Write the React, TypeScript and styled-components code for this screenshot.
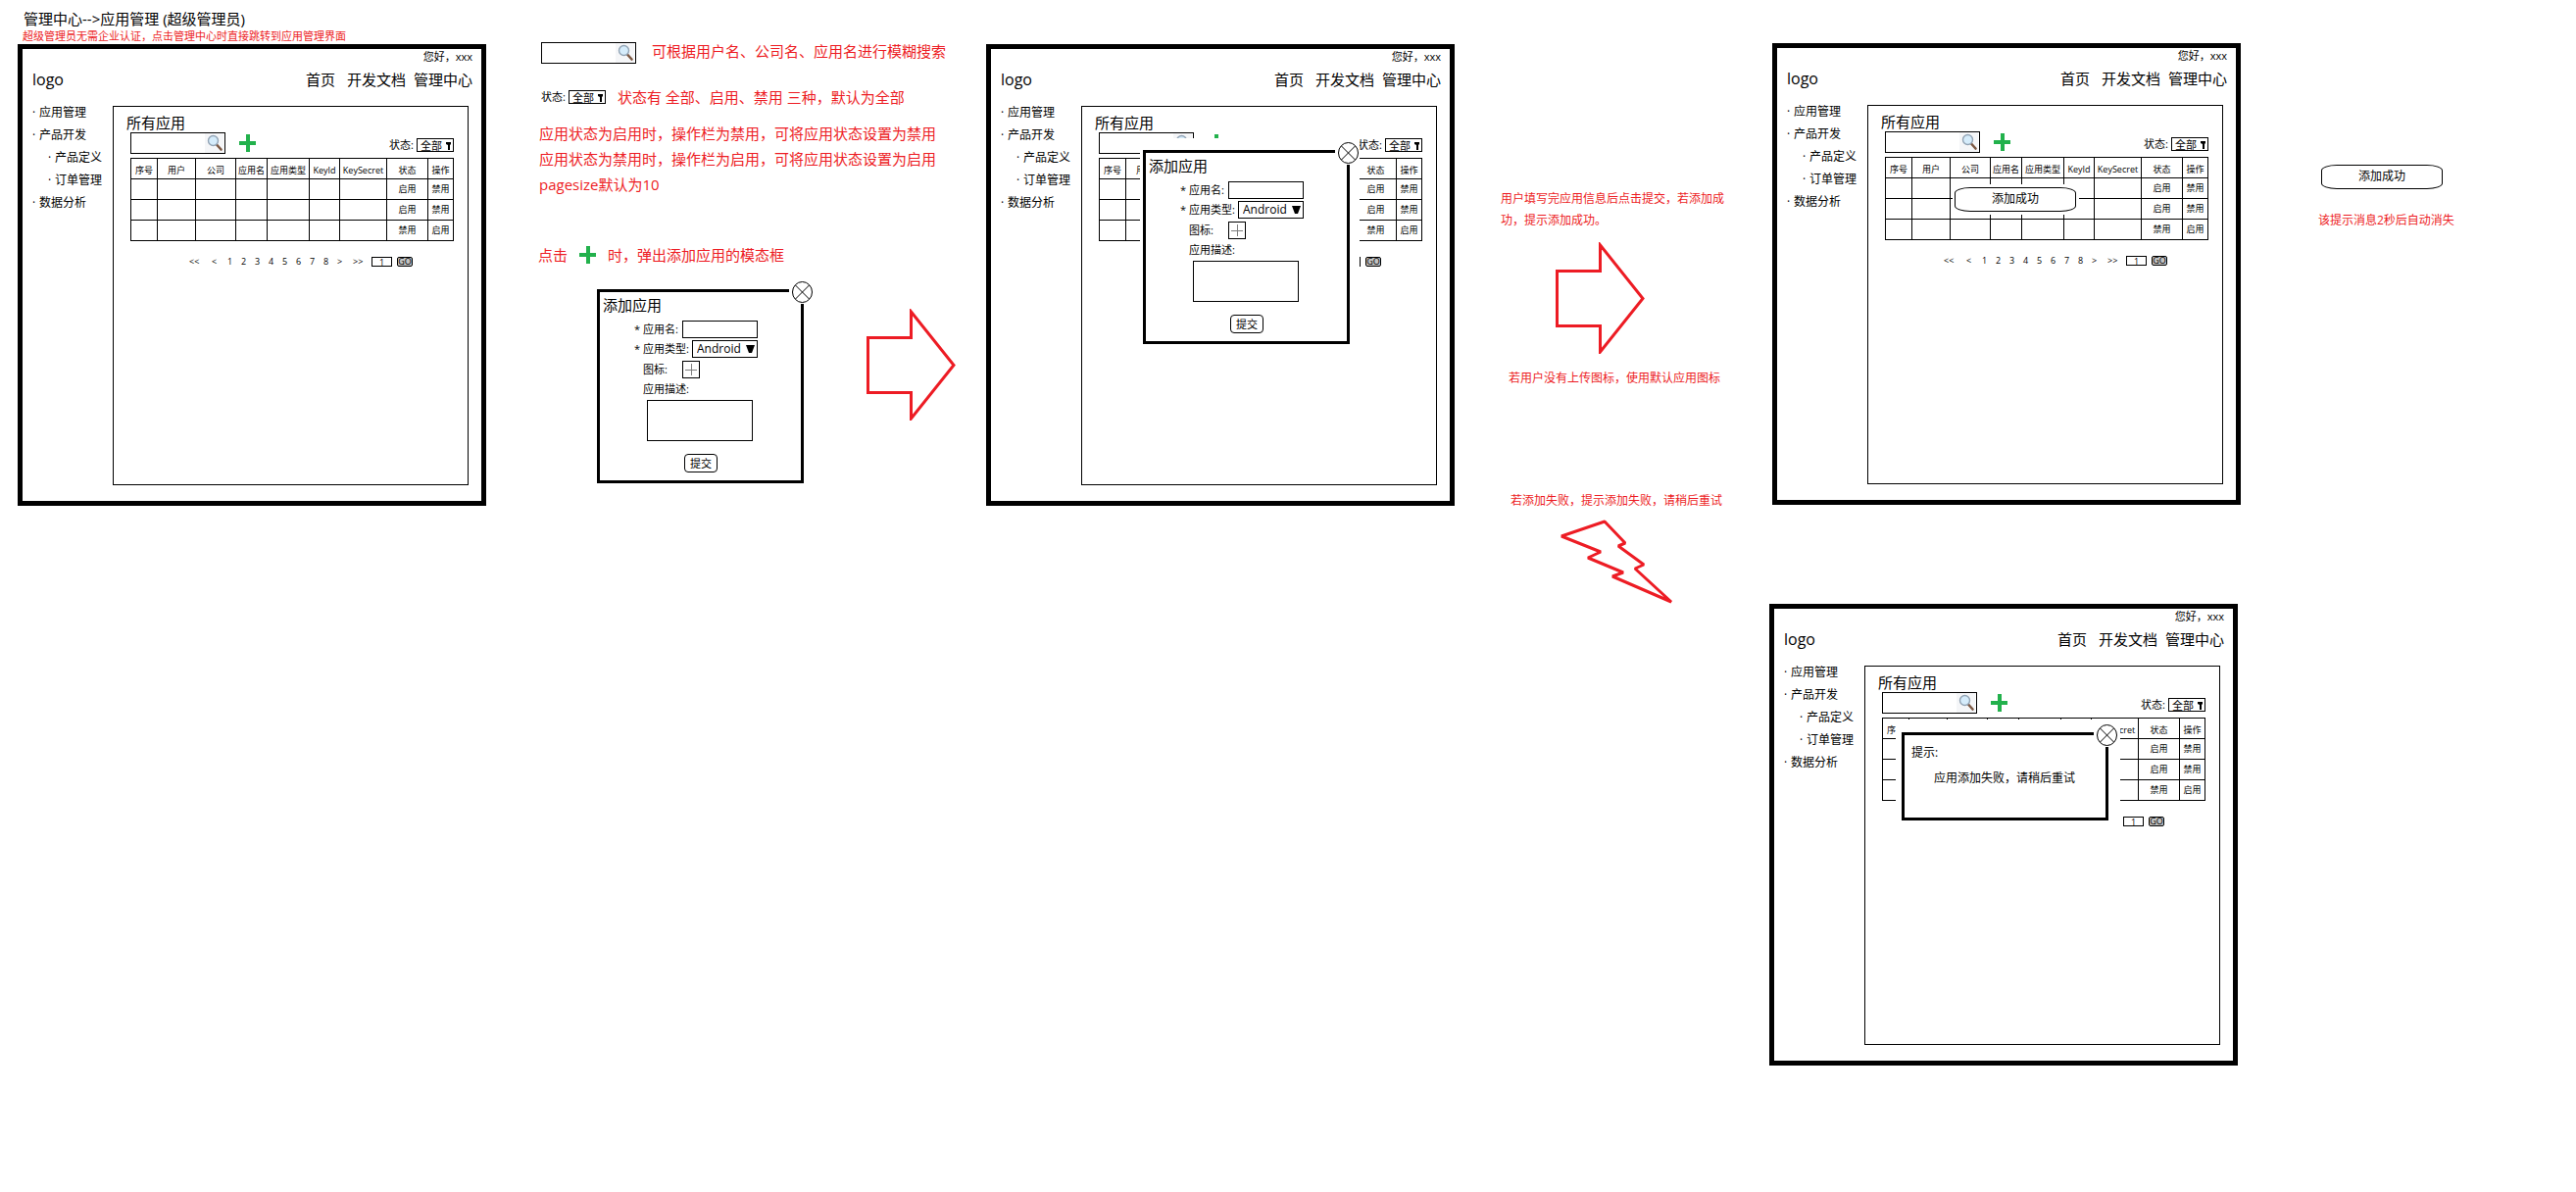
import React, { useId } from "react";
import styled, { createGlobalStyle } from "styled-components";

const RED = "#ed1c24";
const GREEN = "#22b14c";

const GlobalStyle = createGlobalStyle`
  *, *::before, *::after { box-sizing: border-box; }
  body {
    margin: 0;
    background: #fff;
    color: #000;
    font-family: "Open Sans", "Noto Sans CJK SC", sans-serif;
    font-size: 12px;
    line-height: 16px;
  }
  h1, h2, p, ul, form { margin: 0; padding: 0; font-weight: 400; }
  input, select, textarea, button { font: inherit; color: inherit; }
`;

/* ---------- board ---------- */

const Board = styled.main`
  display: grid;
  grid-template-columns: 531fr 457fr 524fr 275fr 560fr 263fr;
  align-items: start;
  padding-left: 18px;
  white-space: nowrap;
`;

const Column = styled.section<{ $top?: number; $left?: number }>`
  display: flex;
  flex-direction: column;
  align-items: flex-start;
  padding-top: ${(p) => p.$top ?? 0}px;
  padding-left: ${(p) => p.$left ?? 0}px;
`;

const PageTitle = styled.h1`
  padding: 9px 0 0 6px;
  font-size: 15px;
  line-height: 20px;
`;

const Note = styled.p<{ $size?: number; $line?: number; $top?: number; $left?: number }>`
  color: ${RED};
  font-size: ${(p) => p.$size ?? 12}px;
  line-height: ${(p) => p.$line ?? 22}px;
  margin-top: ${(p) => p.$top ?? 0}px;
  margin-left: ${(p) => p.$left ?? 0}px;
`;

const WrappedNote = styled(Note)`
  max-width: 230px;
  white-space: normal;
`;

const NoteRow = styled.div<{ $gap: number; $top?: number; $left?: number; $align?: string }>`
  display: flex;
  align-items: ${(p) => p.$align ?? "center"};
  gap: ${(p) => p.$gap}px;
  margin-top: ${(p) => p.$top ?? 0}px;
  margin-left: ${(p) => p.$left ?? 0}px;
`;

const FlowRow = styled.div`
  display: flex;
  align-items: flex-start;
  gap: 64px;
  margin: 24px 0 0 60px;
`;

const Drawing = styled.svg<{ $top?: number; $left?: number }>`
  display: block;
  flex: none;
  margin-top: ${(p) => p.$top ?? 0}px;
  margin-left: ${(p) => p.$left ?? 0}px;
`;

/* ---------- small controls ---------- */

const SearchField = styled.label`
  display: flex;
  flex: none;
  width: 97px;
  height: 22px;
  border: 1px solid #000;
  background: #fff;

  input {
    flex: 1;
    min-width: 0;
    border: 0;
    padding: 0 2px;
    background: none;
    outline: none;
  }
  svg { flex: none; margin-right: 1px; background: #f5f6f8; }
`;

const PlusButton = styled.button`
  display: block;
  flex: none;
  width: 17px;
  height: 18px;
  padding: 0;
  border: 0;
  background: none;
`;

const StatusLabel = styled.label`
  display: flex;
  align-items: center;
  gap: 3px;
  font-size: 11px;
  line-height: 14px;
`;

const SelectBox = styled.span<{ $w: number; $h: number }>`
  display: flex;
  align-items: center;
  width: ${(p) => p.$w}px;
  height: ${(p) => p.$h}px;
  border: 1px solid #000;
  background: #fff;
  padding-right: 2px;

  select {
    flex: 1;
    min-width: 0;
    height: 100%;
    appearance: none;
    border: 0;
    padding: 0 0 0 3px;
    background: none;
    outline: none;
  }
  svg { flex: none; }
`;

function SearchBox() {
  return (
    <SearchField>
      <input type="text" aria-label="搜索" />
      <svg width="19" height="20" viewBox="0 0 19 20">
        <path d="M12 11.5L16.5 16.5" stroke="#7d5a45" strokeWidth="2.6" strokeLinecap="round" />
        <circle cx="8.5" cy="7.5" r="5" fill="#d5ecfb" stroke="#93a4b5" strokeWidth="1.4" />
      </svg>
    </SearchField>
  );
}

function AddButton() {
  return (
    <PlusButton type="button" aria-label="添加应用">
      <svg width="17" height="18" viewBox="0 0 17 18" display="block">
        <path d="M7 0h4v7h6v4h-6v7h-4v-7h-7v-4h7z" fill={GREEN} />
      </svg>
    </PlusButton>
  );
}

function StatusFilter() {
  return (
    <StatusLabel>
      状态:
      <SelectBox $w={38} $h={14}>
        <select>
          <option>全部</option>
          <option>启用</option>
          <option>禁用</option>
        </select>
        <svg width="5" height="9" viewBox="0 0 5 9">
          <path d="M0 1h5v2l-1 1v5h-2v-5l-2 -1z" />
        </svg>
      </SelectBox>
    </StatusLabel>
  );
}

/* ---------- application window ---------- */

const Window = styled.article<{ $top?: number; $left?: number }>`
  position: relative;
  display: flex;
  flex-direction: column;
  width: 100%;
  max-width: 478px;
  min-height: 471px;
  border: 5px solid #000;
  background: #fff;
  margin-top: ${(p) => p.$top ?? 0}px;
  margin-left: ${(p) => p.$left ?? 0}px;
`;

const Greeting = styled.p`
  padding-right: 9px;
  text-align: right;
  font-size: 11px;
  line-height: 16px;
`;

const Header = styled.header`
  display: flex;
  align-items: center;
  padding: 5px 9px 0 10px;
  font-size: 15px;
  line-height: 20px;
`;

const Logo = styled.span`
  margin-right: auto;
  font-size: 16px;
`;

const Nav = styled.nav`
  display: flex;
  a { color: inherit; text-decoration: none; }
  a + a { margin-left: 12px; }
  a + a + a { margin-left: 8px; }
`;

const Body = styled.div`
  display: flex;
  flex: 1;
  padding: 17px 13px 16px 10px;
`;

const Menu = styled.ul`
  flex: none;
  width: 82px;
  margin-top: -5px;
  list-style: none;
  line-height: 23px;
`;

const MenuItem = styled.li<{ $sub?: boolean }>`
  padding-left: ${(p) => (p.$sub ? 16 : 0)}px;
  a { display: flex; color: inherit; text-decoration: none; }
  a::before { content: "·"; width: 7px; }
`;

const Panel = styled.section`
  flex: 1;
  min-width: 0;
  border: 1px solid #000;
  padding: 7px 14px 0 17px;
`;

const PanelTitle = styled.h2`
  margin-left: -4px;
  font-size: 15px;
  line-height: 19px;
`;

const Toolbar = styled.div`
  display: flex;
  gap: 14px;
  align-items: center;
  ${StatusLabel} { margin: 4px 0 0 auto; }
`;

const Table = styled.table`
  width: 100%;
  margin-top: 4px;
  border-collapse: collapse;
  table-layout: fixed;
  font-size: 9px;
  line-height: 12px;

  th, td {
    height: 21px;
    border: 1px solid #000;
    padding: 0;
    text-align: center;
    font-weight: 400;
  }
  th { padding-top: 3px; }
`;

const Pager = styled.nav`
  display: flex;
  align-items: center;
  justify-content: flex-end;
  margin: 15px 42px 0 0;
  font-size: 9px;
  line-height: 12px;

  a { width: 14px; color: inherit; text-decoration: none; }
  a.wide { width: 23px; }
  a.next { width: 16px; }
  a.last { width: 19px; }
  input {
    width: 21px;
    height: 10px;
    border: 1px solid #000;
    padding: 0;
    text-align: center;
    line-height: 8px;
  }
  button {
    display: flex;
    align-items: center;
    justify-content: center;
    width: 16px;
    height: 10px;
    margin-left: 5px;
    border: 1px solid #000;
    border-radius: 2px;
    background: #c3c3c3;
    padding: 0;
    line-height: 8px;
  }
`;

const columns: [string, number][] = [
  ["序号", 27], ["用户", 39], ["公司", 41], ["应用名", 32], ["应用类型", 43],
  ["KeyId", 31], ["KeySecret", 48], ["状态", 42], ["操作", 26],
];
const rows = [["启用", "禁用"], ["启用", "禁用"], ["禁用", "启用"]];

function AppWindow({ children, top, left }: { children?: React.ReactNode; top?: number; left?: number }) {
  return (
    <Window $top={top} $left={left}>
      <Greeting>您好，xxx</Greeting>
      <Header>
        <Logo>logo</Logo>
        <Nav>
          <a href="#home">首页</a>
          <a href="#docs">开发文档</a>
          <a href="#admin">管理中心</a>
        </Nav>
      </Header>
      <Body>
        <Menu>
          <MenuItem><a href="#apps">应用管理</a></MenuItem>
          <MenuItem><a href="#dev">产品开发</a></MenuItem>
          <MenuItem $sub><a href="#define">产品定义</a></MenuItem>
          <MenuItem $sub><a href="#orders">订单管理</a></MenuItem>
          <MenuItem><a href="#data">数据分析</a></MenuItem>
        </Menu>
        <Panel>
          <PanelTitle>所有应用</PanelTitle>
          <Toolbar>
            <SearchBox />
            <AddButton />
            <StatusFilter />
          </Toolbar>
          <Table>
            <colgroup>
              {columns.map(([name, w]) => <col key={name} width={w} />)}
            </colgroup>
            <thead>
              <tr>{columns.map(([name]) => <th key={name}>{name}</th>)}</tr>
            </thead>
            <tbody>
              {rows.map(([state, action], i) => (
                <tr key={i}>
                  {columns.slice(2).map(([name]) => <td key={name} />)}
                  <td>{state}</td>
                  <td>{action}</td>
                </tr>
              ))}
            </tbody>
          </Table>
          <Pager>
            <a href="#first" className="wide">&lt;&lt;</a>
            <a href="#prev" className="next">&lt;</a>
            {[1, 2, 3, 4, 5, 6, 7, 8].map((n) => <a key={n} href={`#p${n}`}>{n}</a>)}
            <a href="#next" className="next">&gt;</a>
            <a href="#last" className="last">&gt;&gt;</a>
            <input type="text" defaultValue="1" aria-label="页码" />
            <button type="button">GO</button>
          </Pager>
        </Panel>
      </Body>
      {children}
    </Window>
  );
}

/* ---------- dialogs ---------- */

const Dialog = styled.div<{ $h: number }>`
  position: relative;
  flex: none;
  width: 211px;
  height: ${(p) => p.$h}px;
  border: 3px solid #000;
  background: #fff;
`;

const CloseButton = styled.button`
  position: absolute;
  top: -12px;
  right: -13px;
  width: 25px;
  height: 24px;
  border: 0;
  padding: 0 0 0 3px;
  background: #fff;
  svg { display: block; }
`;

const DialogForm = styled.form`
  display: flex;
  flex-direction: column;
  padding: 3px 44px 0 3px;
  font-size: 11px;
  line-height: 18px;
`;

const DialogTitle = styled.h2`
  font-size: 15px;
  line-height: 20px;
  margin-bottom: 6px;
`;

const Field = styled.label`
  display: flex;
  align-items: center;
  justify-content: space-between;
  height: 18px;
  margin: 0 0 2px 32px;

  input {
    width: 77px;
    height: 18px;
    border: 1px solid #000;
    padding: 0 4px;
  }
  select { padding-left: 4px; font-size: 12px; line-height: 16px; }
`;

const PlainField = styled.div`
  display: flex;
  align-items: center;
  height: 20px;
  margin-left: 41px;
`;

const UploadButton = styled.button`
  width: 18px;
  height: 18px;
  margin-left: 15px;
  border: 1px solid #000;
  padding: 2px;
  background: #fff;
  svg { display: block; }
`;

const Description = styled.textarea`
  width: 108px;
  height: 42px;
  margin: 1px 0 13px 45px;
  border: 1px solid #000;
  resize: none;
`;

const SubmitButton = styled.button`
  width: 34px;
  height: 19px;
  margin-left: 83px;
  border: 1px solid #000;
  border-radius: 4px;
  padding: 0;
  background: #fff;
  line-height: 16px;
`;

const Alert = styled.div`
  padding: 10px 0 0 7px;
  p + p { padding: 10px 0 0 23px; }
`;

/* White plate that hides the page right behind a dialog */
const Overlay = styled.div<{ $x: number; $y: number; $w: number; $h: number; $pad: string }>`
  position: absolute;
  left: ${(p) => p.$x}px;
  top: ${(p) => p.$y}px;
  width: ${(p) => p.$w}px;
  height: ${(p) => p.$h}px;
  padding: ${(p) => p.$pad};
  background: #fff;
`;

const Toast = styled.output`
  display: block;
  flex: none;
  width: 124px;
  height: 25px;
  border: 1px solid #000;
  border-radius: 16px / 6px;
  background: #fff;
  text-align: center;
  line-height: 22px;
`;

function Close() {
  return (
    <CloseButton type="button" aria-label="关闭">
      <svg width="21" height="22" viewBox="0 0 21 22" fill="none" stroke="#000">
        <ellipse cx="10.5" cy="11" rx="10" ry="10.5" />
        <path d="M3.5 4L17.5 18M17.5 4L3.5 18" />
      </svg>
    </CloseButton>
  );
}

function AddDialog() {
  const id = useId();
  return (
    <Dialog $h={198} role="dialog" aria-label="添加应用">
      <Close />
      <DialogForm>
        <DialogTitle>添加应用</DialogTitle>
        <Field>* 应用名:<input type="text" /></Field>
        <Field>
          * 应用类型:
          <SelectBox $w={67} $h={18}>
            <select>
              <option>Android</option>
              <option>iOS</option>
            </select>
            <svg width="9" height="8" viewBox="0 0 9 8">
              <path d="M0 0h9l-3 8h-3z" />
            </svg>
          </SelectBox>
        </Field>
        <PlainField>
          图标:
          <UploadButton type="button" aria-label="上传图标">
            <svg width="12" height="12" viewBox="0 0 12 12" stroke="#7f7f7f">
              <path d="M0 6.5h12M6.5 0v12" />
            </svg>
          </UploadButton>
        </PlainField>
        <PlainField as="label" htmlFor={id}>应用描述:</PlainField>
        <Description id={id} />
        <SubmitButton type="button">提交</SubmitButton>
      </DialogForm>
    </Dialog>
  );
}

function Arrow({ top, left }: { top?: number; left?: number }) {
  return (
    <Drawing $top={top} $left={left} width="92" height="114" viewBox="0 0 92 114" fill="none" stroke={RED} strokeWidth="3">
      <path d="M1.5 29.5H45.5V3L89 57.5L45.5 112V85.5H1.5Z" />
    </Drawing>
  );
}

export default function App() {
  return (
    <>
      <GlobalStyle />
      <Board>
        <Column>
          <PageTitle>管理中心--&gt;应用管理 (超级管理员)</PageTitle>
          <Note $size={11} $line={16} $left={5}>超级管理员无需企业认证，点击管理中心时直接跳转到应用管理界面</Note>
          <AppWindow />
        </Column>

        <Column $top={43}>
          <NoteRow $gap={16} $left={3} $align="flex-start">
            <SearchBox />
            <Note $size={15} $line={18}>可根据用户名、公司名、应用名进行模糊搜索</Note>
          </NoteRow>
          <NoteRow $gap={12} $top={23} $left={3}>
            <StatusFilter />
            <Note $size={15}>状态有 全部、启用、禁用 三种，默认为全部</Note>
          </NoteRow>
          <Note $size={15} $line={26} $top={13} $left={1}>
            应用状态为启用时，操作栏为禁用，可将应用状态设置为禁用<br />
            应用状态为禁用时，操作栏为启用，可将应用状态设置为启用<br />
            pagesize默认为10
          </Note>
          <NoteRow $gap={12} $top={48}>
            <Note $size={15}>点击</Note>
            <AddButton />
            <Note $size={15}>时，弹出添加应用的模态框</Note>
          </NoteRow>
          <FlowRow>
            <AddDialog />
            <Arrow top={20} />
          </FlowRow>
        </Column>

        <Column $top={45}>
          <AppWindow>
            <Overlay $x={152} $y={91} $w={224} $h={222} $pad="12px 0 0 3px">
              <AddDialog />
            </Overlay>
          </AppWindow>
        </Column>

        <Column $top={192}>
          <WrappedNote $left={1}>用户填写完应用信息后点击提交，若添加成功，提示添加成功。</WrappedNote>
          <Arrow top={11} left={57} />
          <Note $top={14} $left={9}>若用户没有上传图标，使用默认应用图标</Note>
          <Note $top={103} $left={11}>若添加失败，提示添加失败，请稍后重试</Note>
          <Drawing $top={7} $left={61} width="118" height="90" viewBox="0 0 118 90" fill="none" stroke={RED} strokeWidth="3">
            <path d="M46 3L67 25L60 28L86 47L77 51L114 85L54 59L65 55L29 40L42 34L2 18Z" strokeLinejoin="bevel" />
          </Drawing>
        </Column>

        <Column $top={44}>
          <AppWindow left={3}>
            <Overlay $x={179} $y={139} $w={129} $h={31} $pad="3px 0 0 2px">
              <Toast>添加成功</Toast>
            </Overlay>
          </AppWindow>
          <AppWindow top={101}>
            <Overlay $x={124} $y={113} $w={229} $h={114} $pad="13px 0 0 6px">
              <Dialog $h={90} role="alertdialog" aria-label="提示">
                <Close />
                <Alert>
                  <p>提示:</p>
                  <p>应用添加失败，请稍后重试</p>
                </Alert>
              </Dialog>
            </Overlay>
          </AppWindow>
        </Column>

        <Column $top={168} $left={3}>
          <Toast>添加成功</Toast>
          <Note $top={21} $left={-3}>该提示消息2秒后自动消失</Note>
        </Column>
      </Board>
    </>
  );
}
